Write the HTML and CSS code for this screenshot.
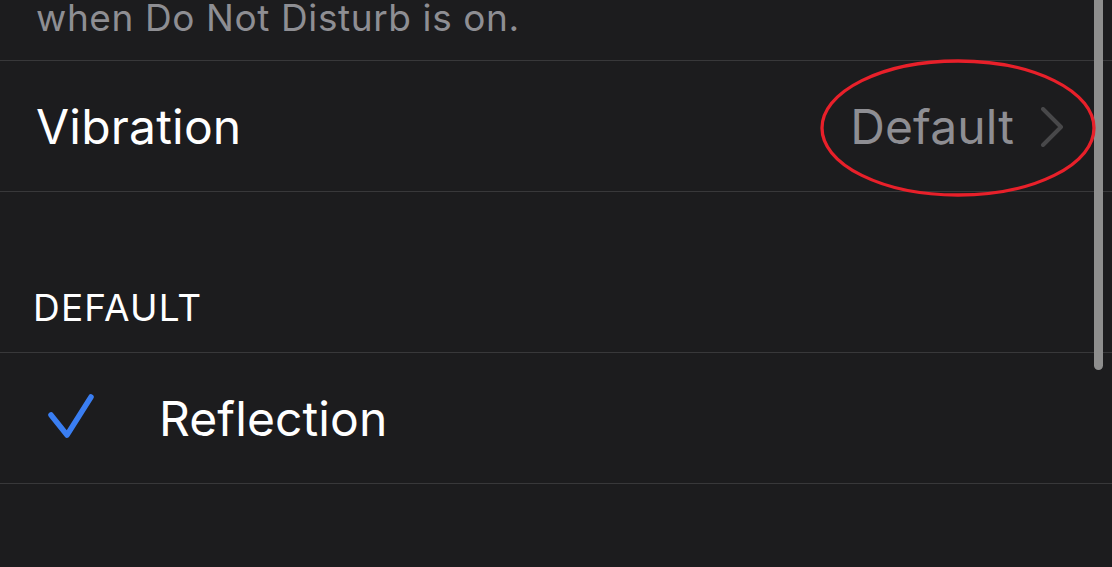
FILE: index.html
```html
<!DOCTYPE html>
<html lang="en">
<head>
<meta charset="utf-8">
<title>Sounds</title>
<link rel="stylesheet" href="styles.css">
</head>
<body>
<div class="screen">
  <div class="footer"><span>when Do Not Disturb is on.</span></div>
  <div class="row">
    <span class="label">Vibration</span>
    <span class="detail">
      <span class="value">Default</span>
      <svg class="chevron" width="24" height="40" viewBox="0 0 24 40"><polyline points="3,2 21,20 3,38" fill="none" stroke="#48484a" stroke-width="4" stroke-linecap="round" stroke-linejoin="round"/></svg>
    </span>
  </div>
  <div class="header">DEFAULT</div>
  <div class="row row-check">
    <svg class="check" width="50" height="50" viewBox="0 0 50 50"><polyline points="4,22 20,42 44,4" fill="none" stroke="#3a7ef2" stroke-width="5.5" stroke-linecap="round" stroke-linejoin="round"/></svg>
    <span class="label">Reflection</span>
  </div>
  <div class="scrollbar"></div>
  <svg class="annotation" width="290" height="150" viewBox="0 0 290 150"><ellipse cx="145" cy="75" rx="136" ry="67" fill="none" stroke="#e8202a" stroke-width="3.3"/></svg>
</div>
</body>
</html>
```
FILE: styles.css
```css
html, body {
  margin: 0;
  padding: 0;
  background: #1c1c1e;
}
.screen {
  position: relative;
  width: 1112px;
  height: 567px;
  overflow: hidden;
  background: #1c1c1e;
  font-family: Inter, "Noto Sans", sans-serif;
  color: #ffffff;
}
.footer {
  height: 60px;
  overflow: hidden;
  padding-left: 36px;
  box-sizing: border-box;
  color: #8e8e93;
  font-size: 37px;
  line-height: 38px;
}
.footer span {
  display: block;
  margin-top: -1px;
  letter-spacing: 0.6px;
}
.row {
  height: 130px;
  border-top: 1px solid #38383a;
  border-bottom: 1px solid #38383a;
  display: flex;
  align-items: center;
  justify-content: space-between;
  padding: 0 48px 0 36px;
  font-size: 48px;
  letter-spacing: 0.2px;
}
.detail {
  display: flex;
  align-items: center;
  gap: 26px;
}
.value {
  color: #8e8e93;
  letter-spacing: 0.1px;
}
.chevron {
  display: block;
  margin-top: 2px;
}
.header {
  height: 160px;
  box-sizing: border-box;
  display: flex;
  align-items: flex-end;
  padding: 0 0 24px 33px;
  font-size: 37px;
  line-height: 40px;
  letter-spacing: 1.2px;
}
.row-check {
  justify-content: flex-start;
  padding-left: 47px;
  gap: 62px;
}
.row-check .label {
  letter-spacing: 0.1px;
}
.check {
  display: block;
}
.scrollbar {
  position: absolute;
  left: 1094px;
  top: -10px;
  width: 9px;
  height: 380px;
  border-radius: 5px;
  background: #8e8e8e;
}
.annotation {
  position: absolute;
  left: 813px;
  top: 53px;
}
```
